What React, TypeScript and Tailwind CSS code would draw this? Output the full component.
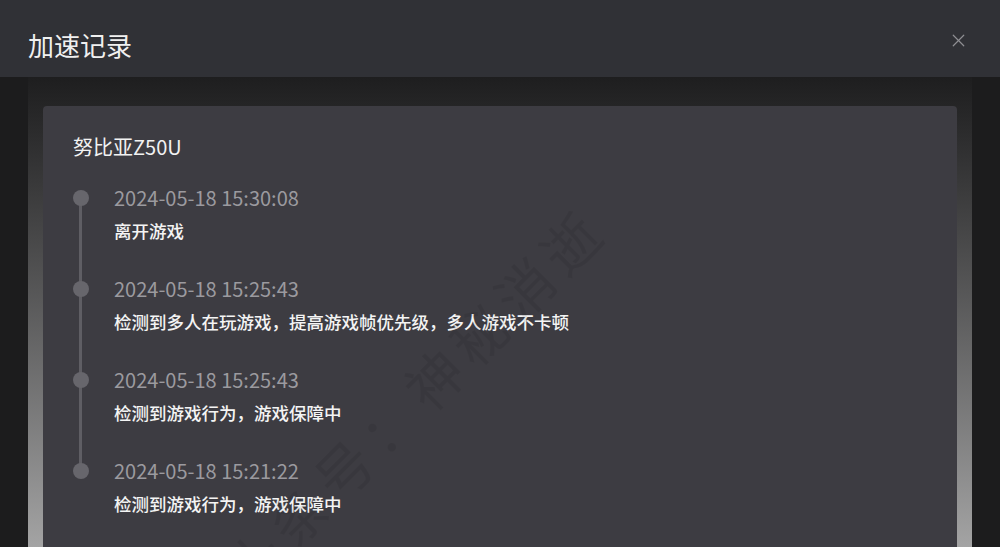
import React from "react";
import { X } from "lucide-react";

const records = [
  { time: "2024-05-18 15:30:08", text: "离开游戏" },
  { time: "2024-05-18 15:25:43", text: "检测到多人在玩游戏，提高游戏帧优先级，多人游戏不卡顿" },
  { time: "2024-05-18 15:25:43", text: "检测到游戏行为，游戏保障中" },
  { time: "2024-05-18 15:21:22", text: "检测到游戏行为，游戏保障中" },
];

const font = { fontFamily: '"Noto Sans CJK SC", "Noto Sans", sans-serif' };

export default function App() {
  return (
    <div className="flex h-[547px] w-[1000px] flex-col overflow-hidden bg-[#1c1c1d]" style={font}>
      {/* Header */}
      <div className="flex h-[77px] shrink-0 items-center justify-between bg-[#303136] pl-[28px] pr-[31px]">
        <h1 className="pt-[12px] text-[26px] leading-none text-[#f0f0f0]">加速记录</h1>
        <X size={21} strokeWidth={1.4} className="mt-[4px] text-[#8e8e92]" />
      </div>

      {/* Body */}
      <div className="flex-1 px-[28px]">
        <div className="h-full bg-gradient-to-b from-[#1e1e1f] to-[#bdbdbd] px-[15px] pt-[29px]">
          <div className="relative h-[520px] overflow-hidden rounded-[4px] bg-[#3d3c42] px-[30px] pt-[27px]">
            <div className="text-[20px] leading-[28px] text-[#f2f2f2]">努比亚Z50U</div>

            <div className="relative mt-[29px]">
              {/* vertical line */}
              <div className="absolute left-[6px] top-[8px] h-[273px] w-[3px] bg-[#5f5e64]" />
              <div className="flex flex-col gap-[39px]">
                {records.map((r, i) => (
                  <div key={i} className="relative flex gap-[25px]">
                    <div className="relative z-10 h-[16px] w-[16px] shrink-0 rounded-full bg-[#67666c]" />
                    <div className="-mt-[6px]">
                      <div className="text-[20px] leading-[28px] text-[#9b9a9f]">{r.time}</div>
                      <div className="mt-[8px] text-[17.5px] font-medium leading-[22px] text-[#f4f4f4]">{r.text}</div>
                    </div>
                  </div>
                ))}
              </div>
            </div>

            {/* watermark */}
            <div className="pointer-events-none absolute left-[110px] top-[240px] w-[540px] -rotate-45 whitespace-nowrap text-[56px] tracking-[8px] text-black/[0.07]">
              头条号：神秘消逝
            </div>
          </div>
        </div>
      </div>
    </div>
  );
}
